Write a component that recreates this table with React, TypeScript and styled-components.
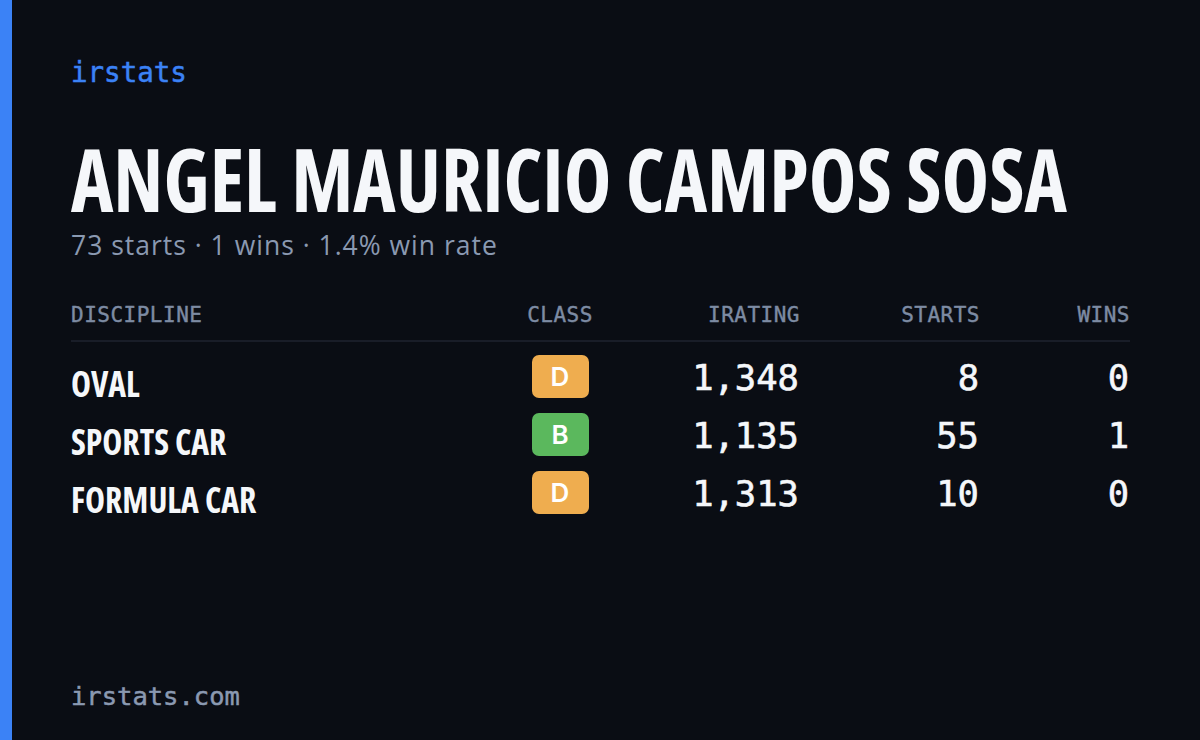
import React from "react";
import styled, { createGlobalStyle } from "styled-components";

const Global = createGlobalStyle`
  html, body { margin: 0; padding: 0; background: #0a0d14; }
  * { box-sizing: border-box; }
`;

const Page = styled.div`
  width: 1200px;
  height: 740px;
  display: flex;
  background: #0a0d14;
  overflow: hidden;
`;

const Accent = styled.div`
  width: 12px;
  flex: none;
  background: #3b82f6;
`;

const Main = styled.main`
  flex: 1;
  min-width: 0;
  display: flex;
  flex-direction: column;
  padding: 52px 70px 24px 59px;
`;

const Brand = styled.div`
  font-family: "DejaVu Sans Mono", monospace;
  font-size: 27.5px;
  line-height: 40px;
  color: #3b82f6;
  -webkit-text-stroke: 0.5px #3b82f6;
`;

const Title = styled.h1`
  margin: 52px 0 16px;
  min-width: 0;
  font-family: "Open Sans", sans-serif;
  font-stretch: 75%;
  font-weight: 700;
  font-size: 88px;
  line-height: 68px;
  color: #f5f7fa;
  white-space: nowrap;
  transform: scaleX(0.915);
  transform-origin: left center;
`;

const Sub = styled.div`
  font-family: "Open Sans", sans-serif;
  font-size: 26.5px;
  letter-spacing: 1px;
  line-height: 34px;
  color: #8a99b1;
`;

const Table = styled.div`
  margin-top: 38px;
  display: grid;
  grid-template-columns: 1fr 140px 170px 180px 150px;
`;

const Head = styled.div<{ $align: string }>`
  font-family: "DejaVu Sans Mono", monospace;
  font-size: 21px;
  letter-spacing: 0.5px;
  line-height: 30px;
  color: #7d8ba3;
  -webkit-text-stroke: 0.4px #7d8ba3;
  text-align: ${(p) => p.$align};
  padding-bottom: 10px;
  border-bottom: 2px solid #191d28;
`;

const Row = styled.div`
  display: contents;
`;

const Cell = styled.div<{ $align: string; $first?: boolean; $lift?: number }>`
  display: flex;
  align-items: flex-end;
  justify-content: ${(p) => p.$align};
  height: 58px;
  padding-bottom: ${(p) => 3 + (p.$lift ?? 0)}px;
  margin-top: ${(p) => (p.$first ? "1px" : "0")};
`;

const Discipline = styled.span`
  font-family: "Open Sans", sans-serif;
  font-stretch: 75%;
  font-weight: 700;
  font-size: 35px;
  line-height: 1;
  color: #f5f7fa;
  margin-bottom: -3px;
  white-space: nowrap;
  transform: scaleX(0.965);
  transform-origin: left center;
`;

const Badge = styled.span<{ $color: string }>`
  width: 57px;
  height: 43px;
  border-radius: 7px;
  background: ${(p) => p.$color};
  color: #fff;
  display: flex;
  align-items: center;
  justify-content: center;
  font-family: Inter, sans-serif;
  font-weight: 600;
  font-size: 26px;
`;

const Num = styled.span`
  font-family: "DejaVu Sans Mono", monospace;
  font-size: 35.5px;
  line-height: 1;
  color: #f5f7fa;
  -webkit-text-stroke: 0.6px #f5f7fa;
  margin-right: 1px;
`;

const Spacer = styled.div`
  flex: 1;
`;

const Footer = styled.div`
  font-family: "DejaVu Sans Mono", monospace;
  font-size: 25.5px;
  line-height: 40px;
  color: #8a99b1;
  -webkit-text-stroke: 0.5px #8a99b1;
`;

const rows = [
  { d: "OVAL", c: "D", col: "#efad4f", ir: "1,348", s: "8", w: "0" },
  { d: "SPORTS CAR", c: "B", col: "#5bb85d", ir: "1,135", s: "55", w: "1" },
  { d: "FORMULA CAR", c: "D", col: "#efad4f", ir: "1,313", s: "10", w: "0" },
];

export default function App() {
  return (
    <Page>
      <Global />
      <Accent />
      <Main>
        <Brand>irstats</Brand>
        <Title>ANGEL MAURICIO CAMPOS SOSA</Title>
        <Sub>73 starts · 1 wins · 1.4% win rate</Sub>
        <Table>
          <Head $align="left">DISCIPLINE</Head>
          <Head $align="center">CLASS</Head>
          <Head $align="right">IRATING</Head>
          <Head $align="right">STARTS</Head>
          <Head $align="right">WINS</Head>
          {rows.map((r, i) => (
            <Row key={r.d}>
              <Cell $align="flex-start" $first={i === 0}>
                <Discipline>{r.d}</Discipline>
              </Cell>
              <Cell $align="center" $first={i === 0}>
                <Badge $color={r.col}>{r.c}</Badge>
              </Cell>
              <Cell $align="flex-end" $first={i === 0} $lift={3}>
                <Num>{r.ir}</Num>
              </Cell>
              <Cell $align="flex-end" $first={i === 0} $lift={3}>
                <Num>{r.s}</Num>
              </Cell>
              <Cell $align="flex-end" $first={i === 0} $lift={3}>
                <Num>{r.w}</Num>
              </Cell>
            </Row>
          ))}
        </Table>
        <Spacer />
        <Footer>irstats.com</Footer>
      </Main>
    </Page>
  );
}
